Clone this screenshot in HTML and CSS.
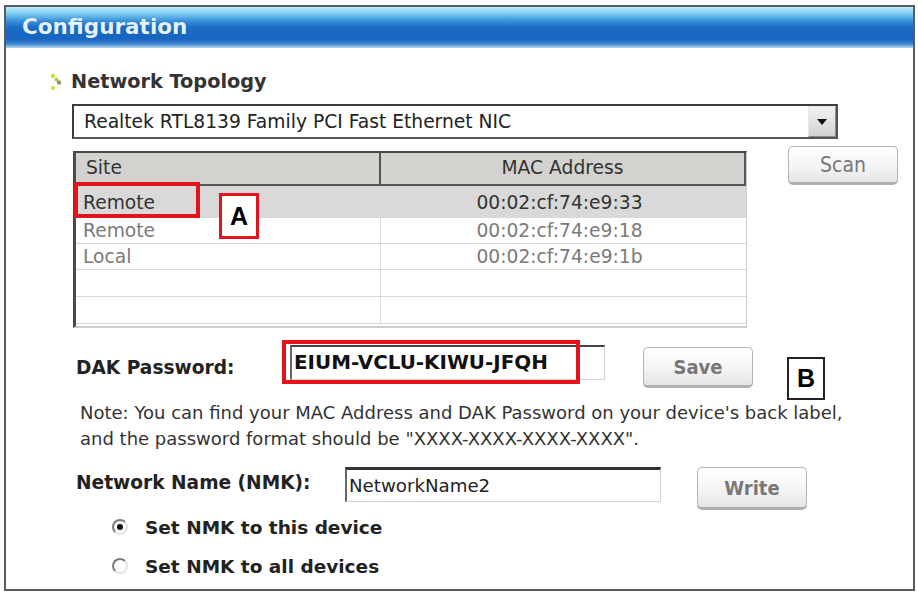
FILE: index.html
```html
<!DOCTYPE html>
<html lang="en">
<head>
  <meta charset="UTF-8">
  <meta name="viewport" content="width=device-width, initial-scale=1.0">
  <title>Configuration</title>
  <link rel="stylesheet" href="styles.css">
</head>
<body>
  <div class="window">
    <div class="titlebar">Configuration</div>

    <div class="content">
      <div class="section-title">
        <svg class="bullet" width="12" height="18" viewBox="0 0 12 18">
          <circle cx="3" cy="3" r="2.2" fill="#c9de3c"/>
          <circle cx="6.5" cy="6.5" r="2" fill="#b4c84a"/>
          <circle cx="9" cy="9.5" r="2.2" fill="#8f9a66"/>
          <circle cx="3" cy="15" r="2.2" fill="#d6e640"/>
        </svg>
        Network Topology
      </div>

      <div class="combo">
        <span class="combo-text">Realtek RTL8139 Family PCI Fast Ethernet NIC</span>
        <span class="combo-btn"><span class="arrow"></span></span>
      </div>

      <div class="topology">
        <div class="device-list">
          <div class="list-head">
            <div class="col-site">Site</div>
            <div class="col-mac">MAC Address</div>
          </div>
          <div class="list-row selected h32">
            <div class="col-site">Remote</div>
            <div class="col-mac">00:02:cf:74:e9:33</div>
          </div>
          <div class="list-row h26">
            <div class="col-site">Remote</div>
            <div class="col-mac">00:02:cf:74:e9:18</div>
          </div>
          <div class="list-row h26">
            <div class="col-site">Local</div>
            <div class="col-mac">00:02:cf:74:e9:1b</div>
          </div>
          <div class="list-row h27">
            <div class="col-site"></div>
            <div class="col-mac"></div>
          </div>
          <div class="list-row h27">
            <div class="col-site"></div>
            <div class="col-mac"></div>
          </div>

          <span class="mark mark-remote"></span>
          <span class="tag tag-a">A</span>
        </div>
        <button class="btn btn-scan" type="button">Scan</button>
      </div>

      <div class="form-row dak-row">
        <label class="form-label dak-label">DAK Password:</label>
        <div class="field-wrap">
          <div class="field dak-field">EIUM-VCLU-KIWU-JFQH</div>
          <span class="mark mark-dak"></span>
        </div>
        <button class="btn btn-save" type="button">Save</button>
        <span class="tag tag-b">B</span>
      </div>

      <p class="note">
        Note: You can find your MAC Address and DAK Password on your device's back label,<br>
        and the password format should be "XXXX-XXXX-XXXX-XXXX".
      </p>

      <div class="form-row nmk-row">
        <label class="form-label nmk-label">Network Name (NMK):</label>
        <div class="field nmk-field">NetworkName2</div>
        <button class="btn btn-write" type="button">Write</button>
      </div>

      <div class="radio-group">
        <div class="radio-line"><span class="radio checked"></span>Set NMK to this device</div>
        <div class="radio-line"><span class="radio"></span>Set NMK to all devices</div>
      </div>
    </div>
  </div>
</body>
</html>
```

FILE: styles.css
```css
body {
  margin: 0;
  background-color: #ffffff;
  color: #222;
  font-family: "DejaVu Sans", sans-serif;
}

.window {
  box-sizing: border-box;
  width: 911px;
  height: 586px;
  margin: 5px 0 0 4px;
  border: 2px solid #5c5c5c;
  background-color: #ffffff;
}

.titlebar {
  height: 41px;
  line-height: 40px;
  padding-left: 16px;
  font-size: 21.5px;
  font-weight: bold;
  color: #e4f2ff;
  text-shadow: 0 0 1px #0d4f9c;
  background: linear-gradient(to bottom,
    #b9ecfb 0%, #86d3f3 14%, #3d97dc 32%, #1a6cc6 50%,
    #1665c0 78%, #3d86d2 90%, #bcd8f0 100%);
}

.content {
  padding-left: 44px;
}

.section-title {
  display: flex;
  align-items: center;
  gap: 9px;
  margin-top: 24px;
  line-height: 20px;
  font-size: 19.3px;
  font-weight: bold;
  color: #333;
}

/* combo box */
.combo {
  box-sizing: border-box;
  display: flex;
  align-items: center;
  width: 766px;
  height: 35px;
  margin: 12px 0 0 22px;
  border: 2px solid #3c3c3c;
  border-right-color: #555;
  border-bottom-color: #555;
}

.combo-text {
  flex: 1;
  padding-left: 10px;
  font-size: 18.7px;
  color: #222;
}

.combo-btn {
  box-sizing: border-box;
  display: flex;
  align-items: center;
  justify-content: center;
  width: 28px;
  height: 31px;
  border: 1px solid #e8e8e8;
  border-right-color: #8a8a8a;
  border-bottom-color: #8a8a8a;
  background: linear-gradient(to bottom, #f2f2f2, #d2d2d2);
}

.combo-btn .arrow {
  width: 0;
  height: 0;
  border-left: 5px solid transparent;
  border-right: 5px solid transparent;
  border-top: 6px solid #111;
}

/* device list */
.topology {
  display: flex;
  align-items: flex-start;
  margin-top: 7px;
}

.device-list {
  position: relative;
  box-sizing: border-box;
  width: 674px;
  height: 177px;
  margin: 5px 0 0 23px;
  border-top: 2px solid #4a4a4a;
  border-left: 3px solid #4a4a4a;
  border-right: 1px solid #cfcfcf;
  border-bottom: 2px solid #cfcfcf;
  font-size: 18.7px;
}

.list-head,
.list-row {
  display: flex;
}

.list-head {
  height: 31px;
  line-height: 30px;
  background-color: #d4d2cf;
  border-bottom: 2px solid #555;
  color: #333;
}

.col-site {
  box-sizing: border-box;
  width: 305px;
  padding-left: 7px;
}

.col-mac {
  flex: 1;
  text-align: center;
}

.list-head .col-site {
  padding-left: 10px;
  border-right: 2px solid #555;
}

.list-head .col-mac {
  border-right: 2px solid #555;
}

.list-row {
  border-bottom: 1px solid #d8d8d8;
  color: #7a7a7a;
}

.list-row .col-site {
  border-right: 1px solid #dcdcdc;
}

.list-row .col-mac {
  padding-right: 8px;
}

.list-row.selected {
  background-color: #d9d9d9;
  color: #333;
}

.h32 { height: 31px; line-height: 33px; }
.h26 { height: 25px; line-height: 25px; }
.h27 { height: 26px; line-height: 26px; }

/* red annotation frames */
.mark {
  position: absolute;
  box-sizing: border-box;
  border: 4px solid #e3121b;
  pointer-events: none;
}

.mark-remote {
  left: -2px;
  top: 29px;
  width: 126px;
  height: 36px;
}

.tag {
  box-sizing: border-box;
  display: flex;
  align-items: center;
  justify-content: center;
  background-color: #ffffff;
  font-family: "Liberation Sans", Arial, sans-serif;
  font-weight: bold;
  font-size: 25px;
  color: #000;
}

.tag-a {
  position: absolute;
  left: 143px;
  top: 40px;
  width: 40px;
  height: 46px;
  border: 3px solid #e3121b;
}

.tag-b {
  width: 38px;
  height: 43px;
  margin: 12px 0 0 34px;
  border: 2px solid #222;
}

/* buttons */
.btn {
  box-sizing: border-box;
  width: 110px;
  padding: 0;
  border: 1px solid #b4b4b4;
  border-bottom: 3px solid #b0b0b0;
  border-radius: 5px;
  background: linear-gradient(to bottom, #ffffff, #f3f3f3 60%, #e4e4e4);
  font-family: "DejaVu Sans Condensed", "DejaVu Sans", sans-serif;
  font-size: 20px;
  color: #777;
}

.btn-scan {
  height: 39px;
  margin-left: 41px;
  font-size: 21px;
}

.btn-save {
  height: 41px;
  margin: 2px 0 0 38px;
  font-weight: bold;
}

.btn-write {
  height: 43px;
  margin-left: 36px;
  font-weight: bold;
}

/* form rows */
.form-row {
  display: flex;
  align-items: flex-start;
}

.form-label {
  box-sizing: border-box;
  margin-left: 26px;
  line-height: 20px;
  font-size: 18.6px;
  font-weight: bold;
  color: #222;
}

.dak-row {
  margin-top: 17px;
}

.dak-label {
  width: 214px;
  margin-top: 13px;
}

.field-wrap {
  position: relative;
}

.field {
  box-sizing: border-box;
  height: 35px;
  line-height: 32px;
  border-top: 2px solid #444;
  border-left: 2px solid #666;
  border-right: 1px solid #d0d0d0;
  border-bottom: 1px solid #d0d0d0;
  background-color: #fff;
  white-space: nowrap;
}

.dak-field {
  width: 315px;
  padding-left: 2px;
  font-size: 19.9px;
  font-weight: bold;
  color: #111;
}

.mark-dak {
  left: -8px;
  top: -5px;
  width: 298px;
  height: 44px;
}

.note {
  margin: 0 0 0 30px;
  line-height: 26px;
  font-size: 18px;
  color: #333;
}

.nmk-row {
  margin-top: 15px;
}

.nmk-label {
  width: 269px;
  margin-top: 6px;
}

.nmk-field {
  width: 316px;
  padding-left: 2px;
  border-top: 3px solid #333;
  font-size: 18.2px;
  color: #222;
}

/* radio buttons */
.radio-group {
  margin: 6px 0 0 62px;
  display: flex;
  flex-direction: column;
  gap: 15px;
}

.radio-line {
  display: flex;
  align-items: center;
  gap: 17px;
  line-height: 24px;
  font-size: 18.5px;
  font-weight: bold;
  color: #222;
}

.radio {
  box-sizing: border-box;
  position: relative;
  width: 16px;
  height: 16px;
  margin-top: -3px;
  border: 2px solid;
  border-color: #7c7c7c #e4e4e4 #e4e4e4 #7c7c7c;
  border-radius: 50%;
  background-color: #fff;
}

.radio.checked::after {
  content: "";
  position: absolute;
  left: 3px;
  top: 3px;
  width: 6px;
  height: 6px;
  border-radius: 50%;
  background-color: #111;
}
```
